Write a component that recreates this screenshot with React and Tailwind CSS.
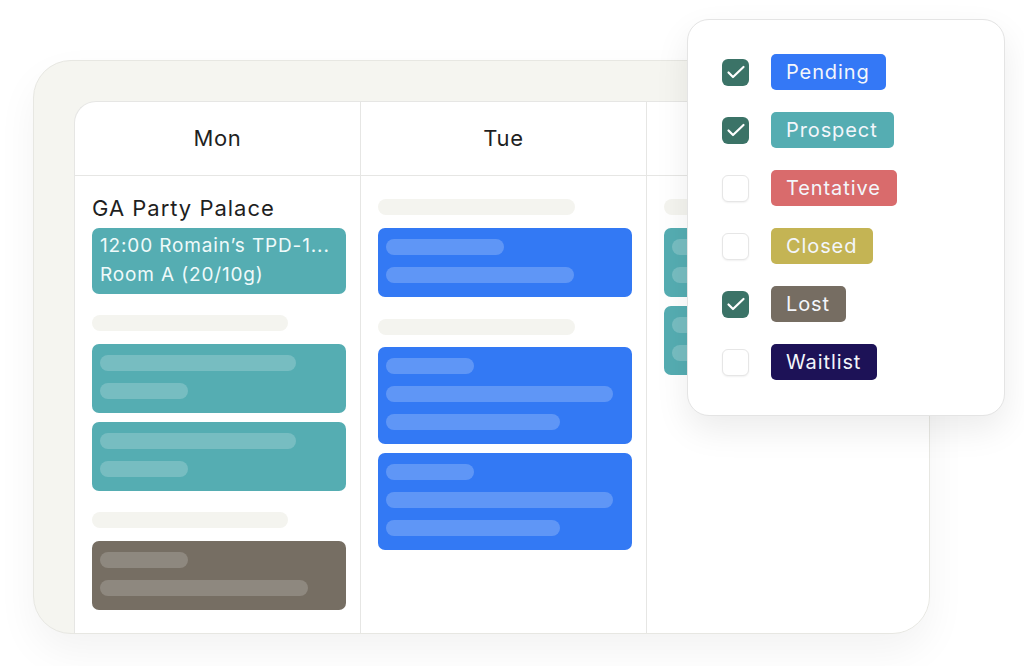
const Bar = ({ w, tone }) => (
    <div className={`h-4 rounded-full ${tone}`} style={{ width: w }} />
);

const Skeleton = ({ w = 196 }) => (
    <div className="h-4 rounded-full bg-[#f4f4ef]" style={{ width: w }} />
);

const BlockCard = ({ color, bars, barTone }) => (
    <div className={`flex flex-col gap-3 rounded-[7px] px-[8px] pt-[11px] pb-[14px] ${color}`}>
        {bars.map((w, i) => (
            <Bar key={i} w={w} tone={barTone} />
        ))}
    </div>
);

const TEAL = "bg-[#55adb2]";
const BLUE = "bg-[#3379f4]";
const BROWN = "bg-[#766e63]";
const TEAL_BAR = "bg-[#ffffff]/20";
const BLUE_BAR = "bg-[#ffffff]/22";
const BROWN_BAR = "bg-[#ffffff]/18";

const statuses = [
    { label: "Pending", color: "bg-[#3478f6]", checked: true },
    { label: "Prospect", color: "bg-[#55adb2]", checked: true },
    { label: "Tentative", color: "bg-[#d96b6c]", checked: false },
    { label: "Closed", color: "bg-[#c4b454]", checked: false },
    { label: "Lost", color: "bg-[#766d62]", checked: true },
    { label: "Waitlist", color: "bg-[#1d1257]", checked: false },
];

const Checkbox = ({ checked }) =>
    checked ? (
        <div className="w-[27px] h-[27px] rounded-[6px] bg-[#3b7367] flex items-center justify-center">
            <svg width="24" height="24" viewBox="0 0 24 24" fill="none" stroke="#ffffff" strokeWidth="2.2" strokeLinecap="round" strokeLinejoin="round">
                <path d="M4.5 12.5l4.5 4.5L19.5 7" />
            </svg>
        </div>
    ) : (
        <div className="w-[27px] h-[27px] rounded-[6px] bg-white border border-[#e6e6e6] shadow-[0_1px_2px_rgba(0,0,0,0.06)]" />
    );

const StatusFilter = () => (
    <div className="absolute left-[687px] top-[19px] w-[318px] h-[397px] rounded-[22px] bg-white border border-[#e4e4e4] shadow-[0_14px_34px_rgba(0,0,0,0.08)] pl-[34px] pt-[34px] flex flex-col gap-[22px]">
        {statuses.map((s) => (
            <div key={s.label} className="flex items-center gap-[22px] h-[36px]">
                <Checkbox checked={s.checked} />
                <span className={`h-[36px] flex items-center rounded-[5px] pl-[15px] pr-[16px] text-[20px] tracking-[0.045em] text-[#f3f6fb] ${s.color}`}>
                    {s.label}
                </span>
            </div>
        ))}
    </div>
);

const Column = ({ day, children, last }) => (
    <div className={`flex flex-col ${last ? "" : "border-r border-[#e6e6e4]"}`}>
        <div className="h-[74px] border-b border-[#e6e6e4] flex items-center justify-center text-[22px] tracking-[0.03em] text-[#1f1f1f]">
            {day}
        </div>
        <div className="flex flex-col pl-[17px] pr-[14px]">{children}</div>
    </div>
);

export default function App() {
    return (
        <div className="relative w-[1024px] h-[666px] bg-white overflow-hidden font-['Inter','Noto_Sans',sans-serif]">
            <div className="ml-[33px] mt-[60px] w-[897px] h-[574px] rounded-[38px] bg-[#f5f5f0] border border-[#e7e7e2] overflow-hidden pl-[40px] pt-[40px] flex shadow-[0_18px_40px_rgba(0,0,0,0.05)]">
                <div className="flex-1 grid grid-cols-[286px_286px_1fr] rounded-tl-[22px] bg-white border-l border-t border-[#e6e6e4]">
                    <Column day="Mon">
                        <div className="pt-[18px] text-[22px] leading-[28px] tracking-[0.045em] text-[#1f1f1f]">GA Party Palace</div>
                        <div className={`mt-[6px] rounded-[7px] px-[8px] pt-[3px] pb-[5px] text-[19px] leading-[29px] tracking-[0.045em] text-[#effafa] ${TEAL}`}>
                            <div className="whitespace-nowrap overflow-hidden">12:00 Romain’s TPD-1...</div>
                            <div>Room A (20/10g)</div>
                        </div>
                        <div className="mt-[21px]">
                            <Skeleton w={196} />
                        </div>
                        <div className="mt-[13px]">
                            <BlockCard color={TEAL} bars={[196, 88]} barTone={TEAL_BAR} />
                        </div>
                        <div className="mt-[9px]">
                            <BlockCard color={TEAL} bars={[196, 88]} barTone={TEAL_BAR} />
                        </div>
                        <div className="mt-[21px]">
                            <Skeleton w={196} />
                        </div>
                        <div className="mt-[13px]">
                            <BlockCard color={BROWN} bars={[88, 208]} barTone={BROWN_BAR} />
                        </div>
                    </Column>
                    <Column day="Tue">
                        <div className="mt-[23px]">
                            <Skeleton w={197} />
                        </div>
                        <div className="mt-[13px]">
                            <BlockCard color={BLUE} bars={[118, 188]} barTone={BLUE_BAR} />
                        </div>
                        <div className="mt-[22px]">
                            <Skeleton w={197} />
                        </div>
                        <div className="mt-[12px]">
                            <BlockCard color={BLUE} bars={[88, 227, 174]} barTone={BLUE_BAR} />
                        </div>
                        <div className="mt-[9px]">
                            <BlockCard color={BLUE} bars={[88, 227, 174]} barTone={BLUE_BAR} />
                        </div>
                    </Column>
                    <Column day="Wed" last>
                        <div className="mt-[23px]">
                            <Skeleton w={197} />
                        </div>
                        <div className="mt-[13px]">
                            <BlockCard color={TEAL} bars={[196, 88]} barTone={TEAL_BAR} />
                        </div>
                        <div className="mt-[9px]">
                            <BlockCard color={TEAL} bars={[196, 88]} barTone={TEAL_BAR} />
                        </div>
                    </Column>
                </div>
            </div>
            <StatusFilter />
        </div>
    );
}
